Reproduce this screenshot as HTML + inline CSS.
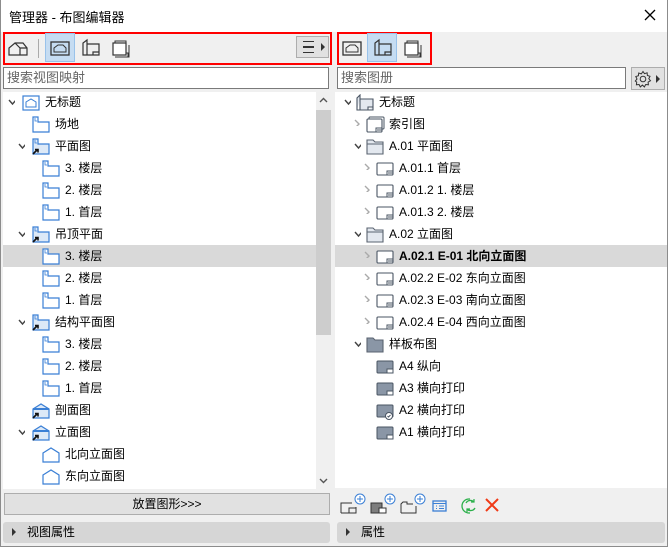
<!DOCTYPE html>
<html><head><meta charset="utf-8"><style>
*{margin:0;padding:0;box-sizing:border-box}
body{width:668px;height:547px;background:#f0f0f0;font-family:"Liberation Sans","Noto Sans CJK SC",sans-serif;font-size:12px;color:#000;position:relative;overflow:hidden}
.a{position:absolute}
.win{left:0;top:0;width:668px;height:547px;border:1px solid #8c8c8c;border-top:none}
.row{position:absolute;height:22px;line-height:22px;white-space:nowrap}
.row svg{position:absolute;top:3px}
.row span{position:absolute;top:0}
.sel{background:#d9d9d9}
.chv{position:absolute;top:7px;width:7px;height:7px}
</style></head><body>
<div class="a" style="left:0;top:0;width:668px;height:32px;background:#fff"></div>
<div class="a" style="left:9px;top:7px;font-size:13px">管理器 - 布图编辑器</div>
<svg class="a" style="left:643px;top:8px" width="14" height="14"><path d="M2 2L12 12M12 2L2 12" stroke="#000" stroke-width="1.3"/></svg>
<div class="win a"></div>

<!-- toolbars -->
<div class="a" style="left:3px;top:32px;width:329px;height:33px;border:2px solid #f00"></div>
<svg class="a" style="left:8px;top:40px" width="20" height="18"><path d="M1 15V8L7 3H15L19 8V15ZM7 3L12 8V15M12 8H19" fill="none" stroke="#333" stroke-width="1.2"/></svg>
<div class="a" style="left:38px;top:39px;width:1px;height:19px;background:#aaa"></div>
<div class="a" style="left:45px;top:33px;width:30px;height:29px;background:#c5dcf2;border:1px solid #99c2ea"></div>
<svg class="a" style="left:50px;top:39px" width="20" height="18"><rect x="1" y="3" width="18" height="13" fill="none" stroke="#333" stroke-width="1.3"/><path d="M4 13V9L8 6H13L16 9V13Z" fill="none" stroke="#333"/></svg>
<svg class="a" style="left:79px;top:38px" width="22" height="20"><path d="M4 17V5L8 2V17ZM4 17H20V6H8M14 17V14H20" fill="none" stroke="#333" stroke-width="1.2"/></svg>
<svg class="a" style="left:110px;top:38px" width="20" height="20"><rect x="3" y="5" width="13" height="12" fill="#fff" stroke="#333" stroke-width="1.2"/><path d="M5 5V3H16V15H18V19H5" fill="none" stroke="#333"/><path d="M7 19H19V7" fill="none" stroke="#333"/></svg>
<div class="a" style="left:296px;top:36px;width:33px;height:22px;background:#e1e1e1;border:1px solid #adadad"></div>
<div class="a" style="left:303px;top:41px;width:11px;height:12px;border-top:1.5px solid #333;border-bottom:1.5px solid #333"></div>
<div class="a" style="left:303px;top:46px;width:11px;height:1.5px;background:#333"></div>
<div class="a" style="left:321px;top:43px;border-left:4px solid #333;border-top:4px solid transparent;border-bottom:4px solid transparent"></div>

<div class="a" style="left:337px;top:32px;width:95px;height:33px;border:2px solid #f00"></div>
<svg class="a" style="left:342px;top:39px" width="20" height="18"><rect x="1" y="3" width="18" height="13" fill="none" stroke="#333" stroke-width="1.3"/><path d="M4 13V9L8 6H13L16 9V13Z" fill="none" stroke="#333"/></svg>
<div class="a" style="left:367px;top:33px;width:30px;height:29px;background:#c5dcf2;border:1px solid #99c2ea"></div>
<svg class="a" style="left:371px;top:38px" width="22" height="20"><path d="M4 17V5L8 2V17ZM4 17H20V6H8M14 17V14H20" fill="none" stroke="#333" stroke-width="1.2"/></svg>
<svg class="a" style="left:402px;top:38px" width="20" height="20"><rect x="3" y="5" width="13" height="12" fill="#fff" stroke="#333" stroke-width="1.2"/><path d="M5 5V3H16V15H18V19H5" fill="none" stroke="#333"/><path d="M7 19H19V7" fill="none" stroke="#333"/></svg>

<!-- search -->
<div class="a" style="left:3px;top:67px;width:326px;height:22px;background:#fff;border:1px solid #7a7a7a;color:#666;font-size:13px;line-height:20px;padding-left:3px">搜索视图映射</div>
<div class="a" style="left:337px;top:67px;width:289px;height:22px;background:#fff;border:1px solid #7a7a7a;color:#666;font-size:13px;line-height:20px;padding-left:3px">搜索图册</div>
<div class="a" style="left:631px;top:67px;width:34px;height:23px;background:#e1e1e1;border:1px solid #adadad"></div>
<svg class="a" style="left:634px;top:70px" width="18" height="18"><circle cx="9" cy="9" r="2.8" fill="none" stroke="#333"/><path d="M9 1.5l1.5 2.2 2.6-.9.3 2.7 2.6.8-1.2 2.4 1.7 2-2.4 1.4.3 2.7-2.7-.3-1.3 2.4-2-1.8-2.1 1.8-1.2-2.4-2.7.3.3-2.7L1.3 11 3 9 1.8 6.5l2.6-.8.3-2.7 2.6.9Z" fill="none" stroke="#333"/></svg>
<div class="a" style="left:656px;top:75px;border-left:4px solid #333;border-top:4px solid transparent;border-bottom:4px solid transparent"></div>

<!-- left tree -->
<div class="a" style="left:3px;top:92px;width:313px;height:397px;background:#fff;overflow:hidden">
<div class="row sel" style="left:0;top:153px;width:313px"></div>
</div>
<div class="a" style="left:316px;top:92px;width:15px;height:397px;background:#f0f0f0"></div>
<div class="a" style="left:316px;top:110px;width:15px;height:225px;background:#cdcdcd"></div>
<svg class="a" style="left:319px;top:97px" width="9" height="6"><path d="M1 5L4.5 1.5L8 5" fill="none" stroke="#555" stroke-width="1.4"/></svg>
<svg class="a" style="left:319px;top:478px" width="9" height="6"><path d="M1 1L4.5 4.5L8 1" fill="none" stroke="#555" stroke-width="1.4"/></svg>

<div id="L"></div>

<!-- right tree -->
<div class="a" style="left:335px;top:92px;width:332px;height:396px;background:#fff"></div>
<div class="a" style="left:335px;top:245px;width:332px;height:22px;background:#d9d9d9"></div>
<div id="R"></div>

<!-- bottom left -->
<div class="a" style="left:4px;top:493px;width:326px;height:22px;background:#e1e1e1;border:1px solid #adadad;text-align:center;line-height:20px">放置图形&gt;&gt;&gt;</div>
<div class="a" style="left:3px;top:522px;width:327px;height:21px;background:#d6d6d6;border-radius:3px;line-height:21px;padding-left:24px">视图属性</div>
<div class="a" style="left:12px;top:528px;border-left:4px solid #333;border-top:4px solid transparent;border-bottom:4px solid transparent"></div>
<!-- bottom right -->
<div class="a" style="left:337px;top:522px;width:328px;height:21px;background:#d6d6d6;border-radius:3px;line-height:21px;padding-left:24px">属性</div>
<div class="a" style="left:346px;top:528px;border-left:4px solid #333;border-top:4px solid transparent;border-bottom:4px solid transparent"></div>
<svg class="a" style="left:340px;top:493px" width="130" height="24">
<path d="M1 20V10H12M1 20H16V14" fill="none" stroke="#333"/><rect x="9" y="15" width="7" height="5" fill="none" stroke="#333"/><circle cx="20" cy="6" r="5" fill="#fff" stroke="#3a7fd5"/><path d="M20 3v6M17 6h6" stroke="#3a7fd5"/>
<path d="M31 10H42V20H31Z" fill="#7d7d7d" stroke="#333"/><rect x="39" y="15" width="7" height="5" fill="#fff" stroke="#333"/><circle cx="50" cy="6" r="5" fill="#fff" stroke="#3a7fd5"/><path d="M50 3v6M47 6h6" stroke="#3a7fd5"/>
<path d="M61 20V11L63 9H67V11H73M61 20H76V13" fill="none" stroke="#333"/><circle cx="80" cy="6" r="5" fill="#fff" stroke="#3a7fd5"/><path d="M80 3v6M77 6h6" stroke="#3a7fd5"/>
<rect x="93" y="8" width="13" height="10" fill="none" stroke="#3a7fd5" stroke-width="1.3"/><path d="M93 10.5H106M96 13h1M99 13h5M96 15.5h1M99 15.5h5" stroke="#3a7fd5"/>
<circle cx="130" cy="13" r="7" fill="none" stroke="#2bb04a" stroke-width="1.3" transform="translate(-1,0)"/>
</svg>
<svg class="a" style="left:461px;top:497px" width="40" height="18"><path d="M5 6a5 5 0 0 1 8-1M14 11a5 5 0 0 1-8 1" fill="none" stroke="#2bb04a" stroke-width="1.3"/><path d="M13 2v3h-3M6 15v-3h3" fill="none" stroke="#2bb04a" stroke-width="1.2"/>
<path d="M25 2L37 14M37 2L25 14" stroke="#f03a17" stroke-width="2"/></svg>

<script>
var P='<path d="M1 1h5v5h11v10H1z" fill="FILL" stroke="#3a7fd5" stroke-width="1.2"/><path d="M3 2v3h2" fill="none" stroke="#3a7fd5" stroke-width=".8"/>';
var ARR='<path d="M1 16L5 12M3 11.5h3v3" fill="none" stroke="#111" stroke-width="1.6"/>';
var E='<path d="M1 7L9 2L17 7V16H1z" fill="FILL" stroke="#3a7fd5" stroke-width="1.2"/>';
function icon(t){
 var s='';
 if(t=='plan')s=P.replace('FILL','#fff');
 if(t=='planp')s=P.replace('FILL','#dde9f7')+ARR;
 if(t=='elev')s=E.replace('FILL','#fff');
 if(t=='elevp')s=E.replace('FILL','#dde9f7')+'<path d="M1 7H17" stroke="#3a7fd5" stroke-width="2"/>'+ARR;
 if(t=='root')s='<rect x="1" y="2" width="16" height="14" fill="#fff" stroke="#3a7fd5" stroke-width="1.2"/><path d="M4 13V8L9 5L14 8V13Z" fill="none" stroke="#3a7fd5"/>';
 if(t=='book')s='<path d="M1 16V4L4 1V16ZM1 16H17V5H4M12 16V13H17" fill="#e3e8ef" stroke="#4a5563" stroke-width="1.1"/>';
 if(t=='sheet')s='<rect x="1" y="3" width="16" height="12" rx="1" fill="#fff" stroke="#4a5563" stroke-width="1.1"/><path d="M11 15V11H17M12 13H17" fill="none" stroke="#4a5563"/>';
 if(t=='index')s='<rect x="3" y="1" width="15" height="12" rx="1" fill="#fff" stroke="#4a5563"/><rect x="1" y="3" width="15" height="13" rx="1" fill="#fff" stroke="#4a5563" stroke-width="1.1"/><path d="M10 16V12H16M11 14H16" fill="none" stroke="#4a5563"/>';
 if(t=='folder')s='<path d="M1 16V2H7L9 4H17V16Z" fill="#e3e8ef" stroke="#5a6370" stroke-width="1.1"/><path d="M1 6H17" stroke="#5a6370"/>';
 if(t=='folderd')s='<path d="M1 16V2H7L9 4H17V16Z" fill="#8a96a6" stroke="#5a6370" stroke-width="1.1"/>';
 if(t=='master')s='<rect x="1" y="3" width="16" height="12" rx="1" fill="#8a96a6" stroke="#4a5563"/><path d="M11 15V11H17V15Z" fill="#fff" stroke="#4a5563"/>';
 if(t=='master2')s='<rect x="1" y="3" width="16" height="12" rx="1" fill="#8a96a6" stroke="#4a5563"/><circle cx="13" cy="14" r="3.5" fill="#fff" stroke="#4a5563"/><path d="M11.5 14l1 1 2-2" fill="none" stroke="#4a5563"/>';
 return '<svg width="19" height="18" style="left:0">'+s+'</svg>';
}
function chev(c){
 if(c=='v')return '<svg class="chv" width="9" height="7" style="top:8px"><path d="M1 1L4.5 5L8 1" fill="none" stroke="#444" stroke-width="1.4"/></svg>';
 if(c=='>')return '<svg class="chv" width="7" height="10" style="top:6px"><path d="M1 1L5 5L1 9" fill="none" stroke="#aaa" stroke-width="1.4"/></svg>';
 return '';
}
function build(id,items,base,step,ch0){
 var h='';
 items.forEach(function(it,i){
  var lv=it[0],c=it[1],ic=it[2],tx=it[3],b=it[4];
  var x=base+lv*step;
  var top=91+i*22;
  h+='<div class="row" style="left:0;top:'+top+'px;width:1px">';
  if(c)h+=chev(c).replace('class="chv"','class="chv" ').replace('style="','style="left:'+(x-ch0)+'px;');
  h+=icon(ic).replace('style="left:0"','style="left:'+x+'px"');
  h+='<span style="left:'+(x+23)+'px;'+(b?'font-weight:bold':'')+'">'+tx+'</span></div>';
 });
 document.getElementById(id).innerHTML=h;
}
build('L',[
[0,'v','root','无标题'],[1,'','plan','场地'],[1,'v','planp','平面图'],[2,'','plan','3. 楼层'],[2,'','plan','2. 楼层'],[2,'','plan','1. 首层'],
[1,'v','planp','吊顶平面'],[2,'','plan','3. 楼层'],[2,'','plan','2. 楼层'],[2,'','plan','1. 首层'],
[1,'v','planp','结构平面图'],[2,'','plan','3. 楼层'],[2,'','plan','2. 楼层'],[2,'','plan','1. 首层'],
[1,'','elevp','剖面图'],[1,'v','elevp','立面图'],[2,'','elev','北向立面图'],[2,'','elev','东向立面图']
],22,10,14);
build('R',[
[0,'v','book','无标题'],[1,'>','index','索引图'],[1,'v','folder','A.01 平面图'],[2,'>','sheet','A.01.1 首层'],[2,'>','sheet','A.01.2 1. 楼层'],[2,'>','sheet','A.01.3 2. 楼层'],
[1,'v','folder','A.02 立面图'],[2,'>','sheet','A.02.1 E-01 北向立面图',1],[2,'>','sheet','A.02.2 E-02 东向立面图'],[2,'>','sheet','A.02.3 E-03 南向立面图'],[2,'>','sheet','A.02.4 E-04 西向立面图'],
[1,'v','folderd','样板布图'],[2,'','master','A4 纵向'],[2,'','master','A3 横向打印'],[2,'','master2','A2 横向打印'],[2,'','master','A1 横向打印']
],356,10,12);
</script>
</body></html>
